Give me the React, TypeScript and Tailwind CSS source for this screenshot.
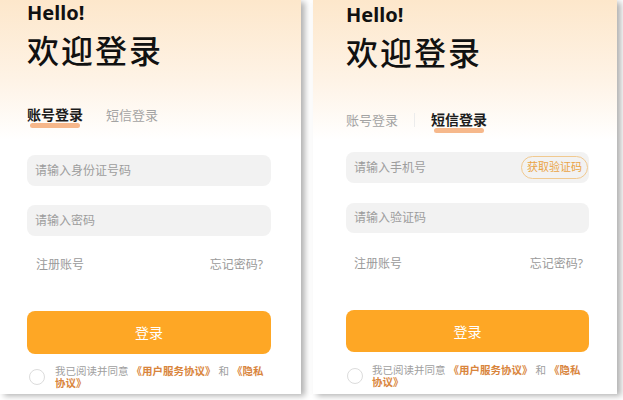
import React from "react";

type Mode = "account" | "sms";

const layout = {
	account: {
		panel: "w-[301px] pl-[27px] pr-[30px]",
		hello: "pt-[1px]",
		tabs: "mt-[34px]",
		input1: "mt-[30px]",
		input2: "mt-[19px] h-[31px]",
		links: "mt-[21px] pl-[9px] pr-[8px]",
		button: "mt-[38px] h-[43px]",
		agree: "mt-[11px] pl-[2px] gap-[10px]",
	},
	sms: {
		panel: "w-[304px] pl-[33px] pr-[28px]",
		hello: "pt-[3px]",
		tabs: "mt-[37px]",
		input1: "mt-[22px]",
		input2: "mt-[20px] h-[30px]",
		links: "mt-[23px] pl-[8px] pr-[6px]",
		button: "mt-[38px] h-[42px]",
		agree: "mt-[12px] pl-[1px] gap-[9px]",
	},
};

function Tab({ label, active }: { label: string; active: boolean }) {
	if (!active) return <span className="text-[13px] leading-[20px] text-[#a3a3a3]">{label}</span>;
	return (
		<span className="relative text-[14px] leading-[20px] font-bold text-[#1c1c1c]">
			<span className="absolute left-[3px] right-[3px] bottom-[-3px] h-[5px] rounded-full bg-[#f3a066] opacity-75" />
			<span className="relative">{label}</span>
		</span>
	);
}

function Agreement() {
	const link = "inline-block font-bold text-[#d9853c]";
	return (
		<p className="w-[210px] flex flex-wrap text-[10.5px] leading-[12px] text-[#a0a0a0]">
			<span className="mr-[3px]">我已阅读并同意</span>
			<span className={`${link} mr-[3px]`}>《用户服务协议》</span>
			<span className="mr-[3px]">和</span>
			<span className={link}>《隐私</span>
			<span className={link}>协议》</span>
		</p>
	);
}

function LoginPanel({ mode }: { mode: Mode }) {
	const l = layout[mode];
	const sms = mode === "sms";
	return (
		<div
			className={`${l.panel} h-[394px] shrink-0 flex flex-col bg-[linear-gradient(180deg,#fde7cb_0px,#fef3e6_80px,#ffffff_140px)] shadow-[4px_2px_6px_rgba(0,0,0,0.3)]`}
		>
			<h2 className={`${l.hello} text-[20px] leading-[24px] font-bold text-[#111]`}>Hello!</h2>
			<h1 className="mt-[6px] text-[32px] leading-[40px] tracking-[2px] font-medium text-[#111]">欢迎登录</h1>

			<div className={`${l.tabs} flex items-center`}>
				<Tab label="账号登录" active={!sms} />
				{sms ? <span className="mx-[16px] h-[14px] w-px bg-[#ececec]" /> : <span className="w-[23px]" />}
				<Tab label="短信登录" active={sms} />
			</div>

			<div className={`${l.input1} h-[31px] rounded-[8px] bg-[#f2f2f2] flex items-center justify-between pl-[8px] pr-[1px]`}>
				<span className="text-[12px] text-[#9d9d9d]">{sms ? "请输入手机号" : "请输入身份证号码"}</span>
				{sms && (
					<span className="h-[23px] px-[5px] rounded-full border border-[#f1c98f] flex items-center text-[11px] text-[#eaa445]">
						获取验证码
					</span>
				)}
			</div>
			<div className={`${l.input2} rounded-[8px] bg-[#f2f2f2] flex items-center pl-[8px]`}>
				<span className="text-[12px] text-[#9d9d9d]">{sms ? "请输入验证码" : "请输入密码"}</span>
			</div>

			<div className={`${l.links} flex justify-between text-[12px] leading-[16px] text-[#9a9a9a]`}>
				<span>注册账号</span>
				<span>忘记密码?</span>
			</div>

			<button className={`${l.button} rounded-[8px] bg-[#fea725] text-white text-[14px]`}>登录</button>

			<div className={`${l.agree} flex items-center`}>
				<span className="h-[16px] w-[16px] shrink-0 rounded-full border border-[#dcdcdc]" />
				<Agreement />
			</div>
		</div>
	);
}

export default function App() {
	return (
		<div className="w-[623px] h-[400px] bg-white flex gap-[12px] overflow-hidden font-['Noto_Sans','Noto_Sans_CJK_SC',sans-serif]">
			<LoginPanel mode="account" />
			<LoginPanel mode="sms" />
		</div>
	);
}
